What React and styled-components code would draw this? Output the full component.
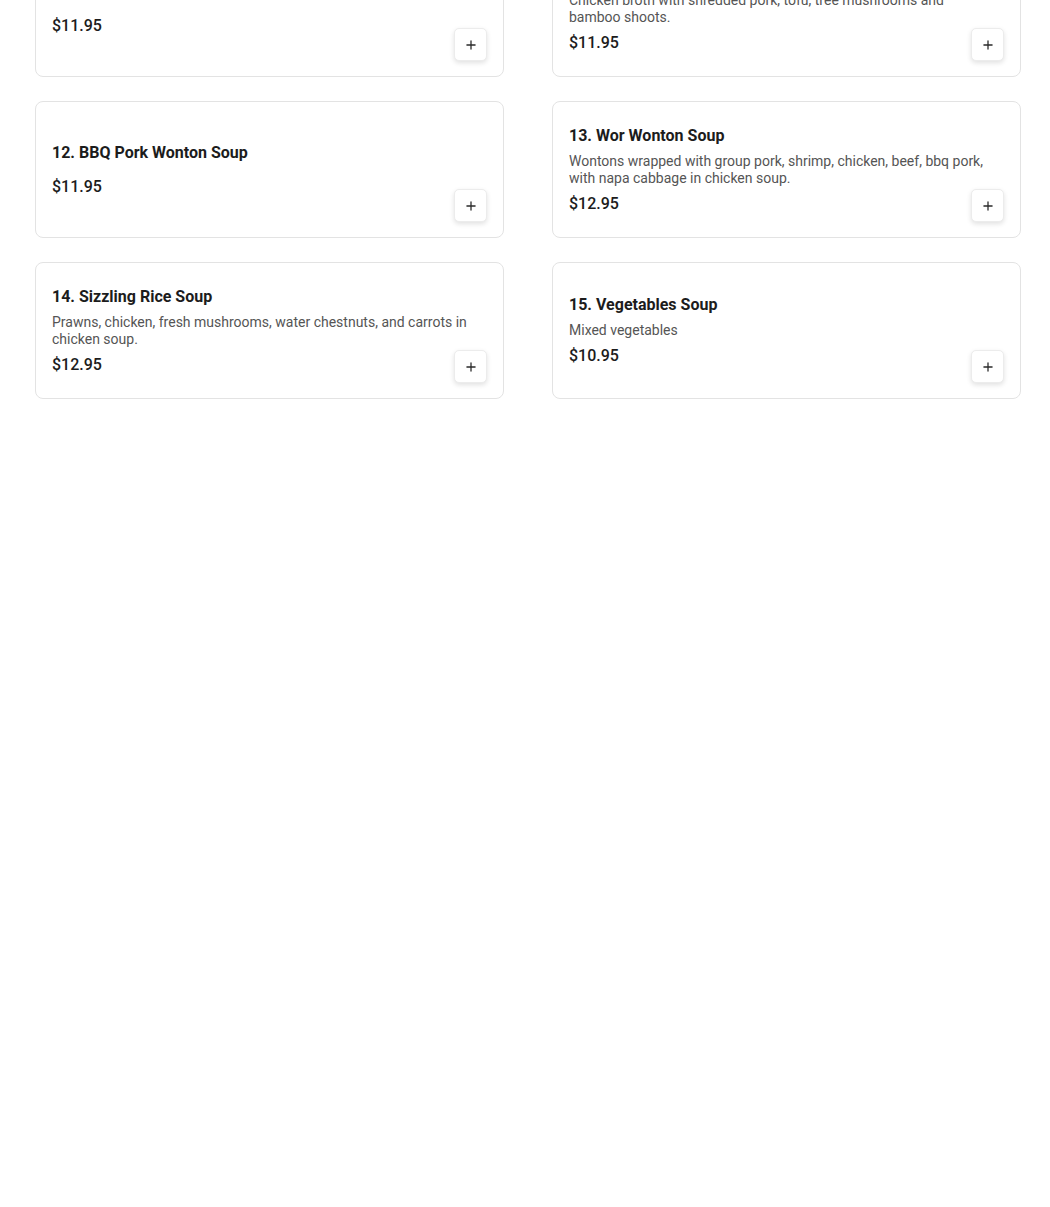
import React from 'react'
import styled, { createGlobalStyle } from 'styled-components'
import { Plus } from 'lucide-react'

const GlobalStyle = createGlobalStyle`
  html, body {
    margin: 0;
    padding: 0;
    background: #ffffff;
    font-family: Roboto, "Liberation Sans", Arial, sans-serif;
  }
`

const ITEMS = [
  { id: 10, name: 'Wonton Soup', price: '11.95' },
  {
    id: 11,
    name: 'Hot & Sour Soup',
    desc: 'Chicken broth with shredded pork, tofu, tree mushrooms and bamboo shoots.',
    price: '11.95',
  },
  { id: 12, name: 'BBQ Pork Wonton Soup', price: '11.95' },
  {
    id: 13,
    name: 'Wor Wonton Soup',
    desc: 'Wontons wrapped with group pork, shrimp, chicken, beef, bbq pork, with napa cabbage in chicken soup.',
    price: '12.95',
  },
  {
    id: 14,
    name: 'Sizzling Rice Soup',
    desc: 'Prawns, chicken, fresh mushrooms, water chestnuts, and carrots in chicken soup.',
    price: '12.95',
  },
  { id: 15, name: 'Vegetables Soup', desc: 'Mixed vegetables', price: '10.95' },
]

const Page = styled.div`
  padding: 0 30px 0 35px;
  overflow: hidden;
`

// page is scrolled a little, so the first row sits partly above the top edge
const MenuGrid = styled.div`
  display: grid;
  grid-template-columns: 469px 469px;
  column-gap: 48px;
  row-gap: 24px;
  margin-top: -60px;
`

const Card = styled.div`
  position: relative;
  display: flex;
  align-items: center;
  box-sizing: border-box;
  height: 137px;
  padding: 16px;
  border: 1px solid #e3e3e3;
  border-radius: 8px;
  background: #ffffff;
`

const Info = styled.div`
  flex: 1;
  display: flex;
  flex-direction: column;
`

const Title = styled.div`
  font-size: 16px;
  line-height: 20px;
  font-weight: 700;
  color: #1c1c1c;
  margin-bottom: 7px;
`

const Desc = styled.div`
  font-size: 14px;
  line-height: 17px;
  color: #555555;
  padding-right: 16px;
`

const Price = styled.div`
  font-size: 16px;
  line-height: 20px;
  font-weight: 500;
  color: #1c1c1c;
  margin-top: 7px;
`

const AddButton = styled.button`
  position: absolute;
  right: 16px;
  bottom: 15px;
  width: 33px;
  height: 33px;
  display: flex;
  align-items: center;
  justify-content: center;
  padding: 0;
  border: 1px solid #ececec;
  border-radius: 5px;
  background: #ffffff;
  color: #2a2a2a;
  box-shadow: 0 2px 5px rgba(0, 0, 0, 0.12);
  cursor: pointer;
`

const MenuCard = ({ item }) => (
  <Card>
    <Info>
      <Title>{item.id}. {item.name}</Title>
      {item.desc && <Desc>{item.desc}</Desc>}
      <Price>${item.price}</Price>
    </Info>
    <AddButton aria-label='Add'>
      <Plus size={14} strokeWidth={2.2} />
    </AddButton>
  </Card>
)

export default function App() {
  return (
    <Page>
      <GlobalStyle />
      <MenuGrid>
        {ITEMS.map((item) => (
          <MenuCard key={item.id} item={item} />
        ))}
      </MenuGrid>
    </Page>
  )
}
